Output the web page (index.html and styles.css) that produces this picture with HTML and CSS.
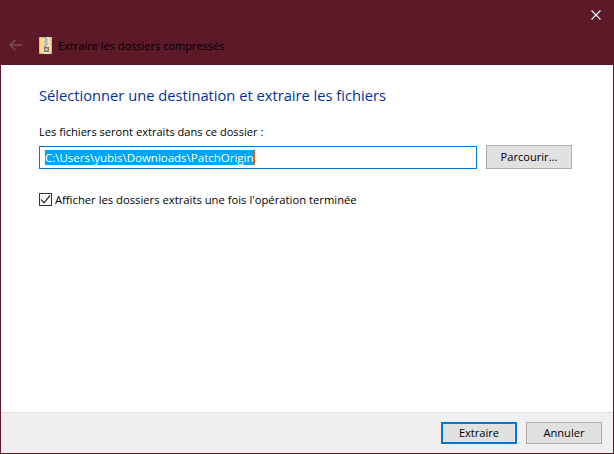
FILE: index.html
```html
<!DOCTYPE html>
<html lang="fr">
<head>
<meta charset="utf-8">
<title>Extraire les dossiers compressés</title>
<link rel="stylesheet" href="styles.css">
</head>
<body>
<div class="window">
  <div class="chrome">
    <div class="close-row">
      <svg class="close" width="10" height="10" viewBox="0 0 10 10"><path d="M0.5 0.5L9.5 9.5M9.5 0.5L0.5 9.5" stroke="#fff" stroke-width="1.1" fill="none"/></svg>
    </div>
    <div class="nav-row">
      <svg class="back" width="14" height="12" viewBox="0 0 14 12"><path d="M13.5 6H1.5M6.5 0.8L1.2 6L6.5 11.2" stroke="#7d4a55" stroke-width="1.6" fill="none"/></svg>
      <svg class="zip" width="13" height="17" viewBox="0 0 13 17">
        <path d="M0.5 0.5H12.5V16.5H0.5Z" fill="#f9dc85" stroke="#e2c062"/>
        <rect x="5" y="0" width="5" height="17" fill="#e8e6da"/>
        <path d="M5 1H8M6 3H9M5 5H8M6 7H9M5 9H8" stroke="#8a8a8a" stroke-width="1"/>
        <rect x="5" y="10" width="5" height="5" fill="#7a7a7a"/>
        <rect x="6.5" y="11.5" width="2" height="2" fill="#e8e6da"/>
      </svg>
      <span class="title">Extraire les dossiers compressés</span>
    </div>
  </div>
  <div class="content">
    <h1 class="heading">Sélectionner une destination et extraire les fichiers</h1>
    <div class="label">Les fichiers seront extraits dans ce dossier :</div>
    <div class="path-row">
      <div class="field"><span class="selection">C:\Users\yubis\Downloads\PatchOrigin</span><span class="caret"></span></div>
      <div class="btn browse">Parcourir...</div>
    </div>
    <div class="check-row">
      <span class="checkbox"><svg width="11" height="11" viewBox="0 0 11 11"><path d="M1 5.5L4 8.8L10 1.5" stroke="#333" stroke-width="1.3" fill="none"/></svg></span>
      <span class="check-label">Afficher les dossiers extraits une fois l'opération terminée</span>
    </div>
  </div>
  <div class="footer">
    <div class="btn primary">Extraire</div>
    <div class="btn">Annuler</div>
  </div>
</div>
</body>
</html>
```
FILE: styles.css
```css
* { box-sizing: border-box; }
html, body { margin: 0; padding: 0; }
body { width: 614px; height: 454px; overflow: hidden; font-family: "Open Sans", "Noto Sans", sans-serif; font-size: 11.1px; color: #000; }
.window { width: 614px; height: 454px; display: flex; flex-direction: column; background: #5c1a28; padding: 0 1px 1px; }
.chrome { height: 65px; display: flex; flex-direction: column; flex: none; }
.close-row { height: 30px; display: flex; justify-content: flex-end; padding: 10px 12px 0 0; }
.close { display: block; }
.nav-row { display: flex; align-items: center; height: 30px; padding-left: 8px; }
.back { flex: none; }
.zip { flex: none; margin-left: 16px; }
.title { margin-left: 6px; color: #000; font-size: 11px; }
.content { flex: 1; background: #fff; padding: 19px 0 0 38px; }
.heading { margin: 0; font-weight: 400; font-size: 14.7px; line-height: 22px; color: #003399; }
.label { margin-top: 18px; line-height: 16px; }
.path-row { display: flex; align-items: flex-start; margin-top: 5px; }
.field { width: 438px; height: 23px; border: 1px solid #0078d7; display: flex; align-items: center; padding-left: 5px; margin-top: 1px; font-size: 11.5px; }
.selection { background: #00a5f5; color: #fff; line-height: 15px; white-space: nowrap; }
.caret { width: 1px; height: 15px; background: #e8590c; }
.btn { width: 76px; height: 22px; border: 1px solid #adadad; background: #e1e1e1; text-align: center; line-height: 19px; }
.browse { width: 86px; height: 24px; margin-left: 9px; line-height: 21px; }
.check-row { display: flex; align-items: center; margin-top: 23px; }
.checkbox { width: 13px; height: 13px; border: 1px solid #333; display: flex; align-items: center; justify-content: center; background: #fff; }
.check-label { margin-left: 3px; font-size: 11.25px; line-height: 15px; }
.footer { flex: none; height: 41px; background: #f0f0f0; border-top: 1px solid #dfdfdf; display: flex; justify-content: flex-end; align-items: flex-start; gap: 9px; padding: 9px 11px 0 0; }
.primary { border: 2px solid #0078d7; line-height: 17px; }
```
